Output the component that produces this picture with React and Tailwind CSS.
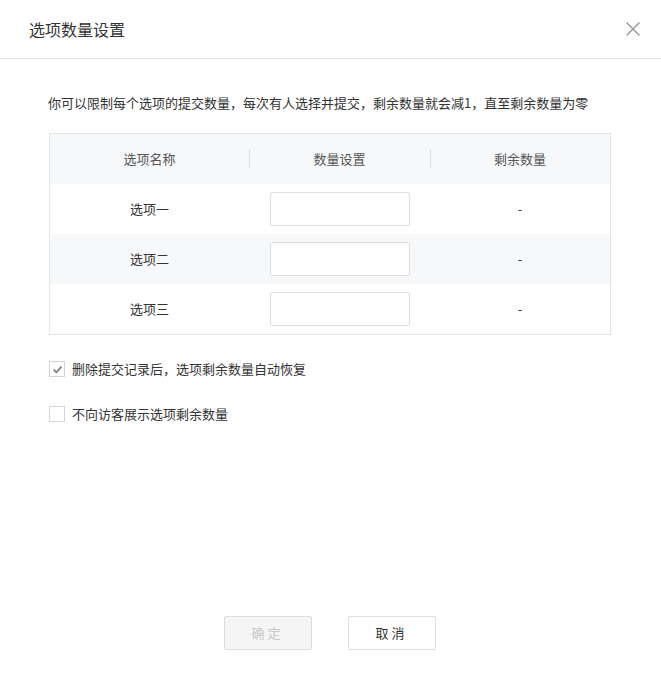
import React, { useState } from "react";

const rows = ["选项一", "选项二", "选项三"];

function Check({ checked, onChange, label }) {
  return (
    <label className="flex items-center gap-[7px] cursor-pointer h-[16px]">
      <span
        onClick={onChange}
        className="w-[16px] h-[16px] border border-[#d4d4d4] bg-white flex items-center justify-center shrink-0"
      >
        {checked && (
          <svg width="11" height="11" viewBox="0 0 10 10">
            <path d="M1.5 5.2 L4 7.6 L8.6 2.4" fill="none" stroke="#7a7a7a" strokeWidth="1.5" />
          </svg>
        )}
      </span>
      <span className="text-[13px] text-[#333]">{label}</span>
    </label>
  );
}

export default function App() {
  const [keep, setKeep] = useState(true);
  const [hide, setHide] = useState(false);

  return (
    <div
      className="w-[661px] h-[677px] bg-white flex flex-col"
      style={{ fontFamily: '"Noto Sans CJK SC", "Liberation Sans", sans-serif' }}
    >
      <header className="h-[59px] border-b border-[#e5e5e5] flex items-center justify-between pl-[29px] pr-[20px] shrink-0">
        <h1 className="text-[16px] text-[#333] leading-none">选项数量设置</h1>
        <button className="w-[16px] h-[16px] flex items-center justify-center">
          <svg width="16" height="16" viewBox="0 0 16 16">
            <path d="M1.5 1.5 L14.5 14.5 M14.5 1.5 L1.5 14.5" stroke="#9a9a9a" strokeWidth="1.5" />
          </svg>
        </button>
      </header>

      <main className="flex-1 px-[49px] pt-[35px]">
        <p className="text-[13px] text-[#333] leading-[18px] -ml-px">
          你可以限制每个选项的提交数量，每次有人选择并提交，剩余数量就会减1，直至剩余数量为零
        </p>

        <div className="mt-[21px] w-[562px] border border-[#e3e4e8] text-[13px]">
          <div className="grid grid-cols-[199px_181px_1fr] h-[50px] bg-[#f7f8fa] text-[#555]">
            <div className="flex items-center justify-center">选项名称</div>
            <div className="flex items-center justify-center relative">
              <span className="absolute left-0 top-[15px] h-[19px] w-px bg-[#dcdde1]" />
              数量设置
            </div>
            <div className="flex items-center justify-center relative">
              <span className="absolute left-0 top-[15px] h-[19px] w-px bg-[#dcdde1]" />
              剩余数量
            </div>
          </div>
          {rows.map((r, i) => (
            <div
              key={r}
              className={`grid grid-cols-[199px_181px_1fr] h-[50px] items-center text-[#333] ${
                i === 1 ? "bg-[#f7f8fa]" : "bg-white"
              }`}
            >
              <div className="text-center">{r}</div>
              <div className="flex justify-center">
                <input className="w-[140px] h-[34px] border border-[#dcdde1] rounded-[2px] bg-white outline-none px-2" />
              </div>
              <div className="text-center">-</div>
            </div>
          ))}
        </div>

        <div className="mt-[26px] flex flex-col gap-[29px]">
          <Check checked={keep} onChange={() => setKeep(!keep)} label="删除提交记录后，选项剩余数量自动恢复" />
          <Check checked={hide} onChange={() => setHide(!hide)} label="不向访客展示选项剩余数量" />
        </div>
      </main>

      <footer className="h-[61px] flex justify-center gap-[36px] pr-[2px] shrink-0">
        <button
          disabled
          className="w-[88px] h-[34px] border border-[#dcdde1] rounded-[2px] bg-[#f5f5f5] text-[#c8c8c8] text-[13px] tracking-[3px]"
        >
          确定
        </button>
        <button className="w-[88px] h-[34px] border border-[#dcdde1] rounded-[2px] bg-white text-[#333] text-[13px] tracking-[3px]">
          取消
        </button>
      </footer>
    </div>
  );
}
